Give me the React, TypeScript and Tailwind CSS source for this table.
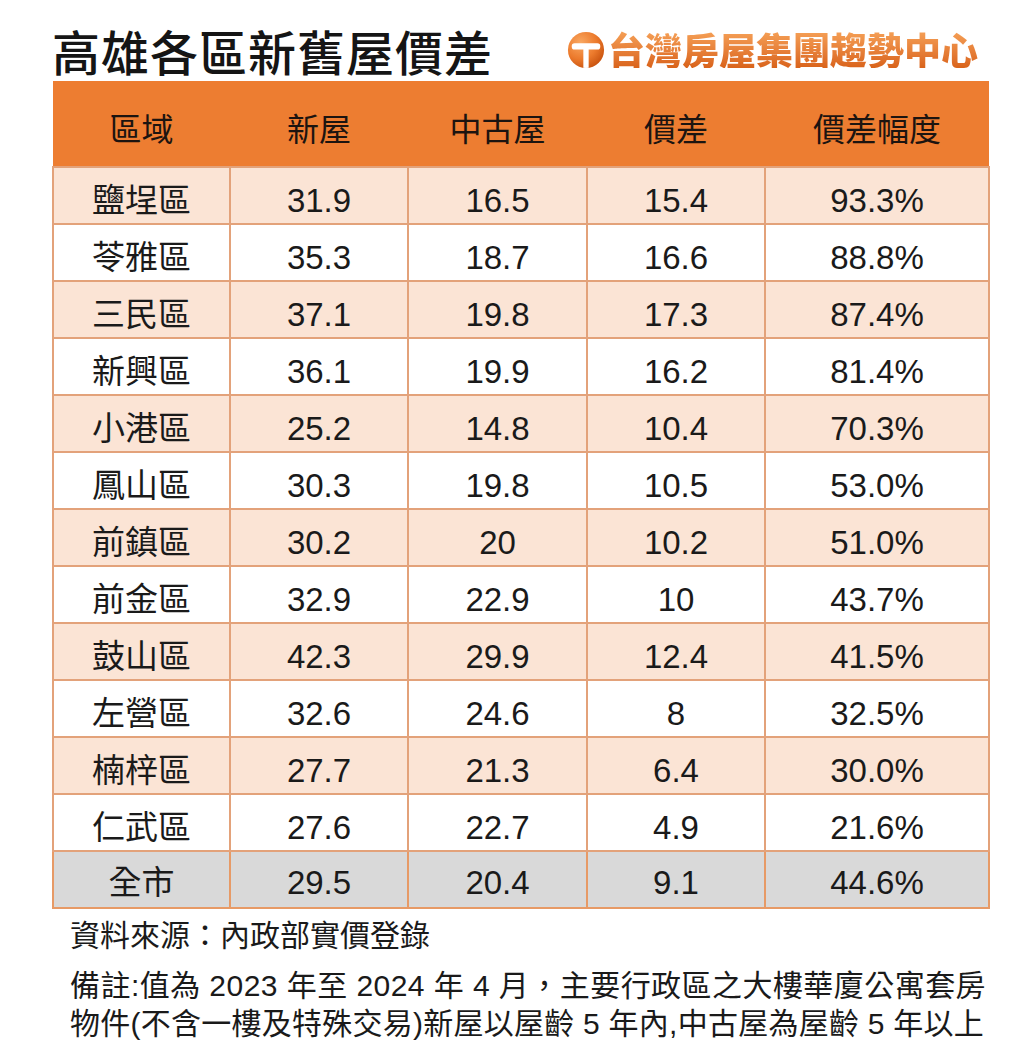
import React from "react";

const rows: [string, string, string, string, string][] = [
  ["鹽埕區", "31.9", "16.5", "15.4", "93.3%"],
  ["苓雅區", "35.3", "18.7", "16.6", "88.8%"],
  ["三民區", "37.1", "19.8", "17.3", "87.4%"],
  ["新興區", "36.1", "19.9", "16.2", "81.4%"],
  ["小港區", "25.2", "14.8", "10.4", "70.3%"],
  ["鳳山區", "30.3", "19.8", "10.5", "53.0%"],
  ["前鎮區", "30.2", "20", "10.2", "51.0%"],
  ["前金區", "32.9", "22.9", "10", "43.7%"],
  ["鼓山區", "42.3", "29.9", "12.4", "41.5%"],
  ["左營區", "32.6", "24.6", "8", "32.5%"],
  ["楠梓區", "27.7", "21.3", "6.4", "30.0%"],
  ["仁武區", "27.6", "22.7", "4.9", "21.6%"],
];

const headers = ["區域", "新屋", "中古屋", "價差", "價差幅度"];

function Logo() {
  return (
    <svg width="38" height="38" viewBox="0 0 40 40" className="shrink-0">
      <defs>
        <radialGradient id="lg" cx="35%" cy="30%" r="75%">
          <stop offset="0%" stopColor="#f9a862" />
          <stop offset="60%" stopColor="#ec7a2c" />
          <stop offset="100%" stopColor="#c9530f" />
        </radialGradient>
        <clipPath id="cc">
          <circle cx="20" cy="20" r="19" />
        </clipPath>
      </defs>
      <circle cx="20" cy="20" r="19" fill="url(#lg)" />
      <g clipPath="url(#cc)" fill="#ffffff">
        <rect x="5" y="13" width="30" height="6.5" rx="3" />
        <rect x="17.2" y="17" width="5.6" height="22" />
      </g>
    </svg>
  );
}

export default function App() {
  const font = { fontFamily: '"Liberation Sans", "Noto Sans CJK TC", sans-serif' };
  return (
    <div className="w-[1024px] h-[1053px] bg-white text-[#1a1a1a] overflow-hidden" style={font}>
      <div className="h-[81px] flex items-center justify-between pl-[52px] pr-[46px] pt-[18px]">
        <div className="text-[48px] leading-none font-medium text-[#151515] tracking-[1px]" style={{ fontFamily: '"Noto Sans CJK TC", sans-serif' }}>
          高雄各區新舊屋價差
        </div>
        <div className="flex items-center gap-[3px]">
          <Logo />
          <span
            className="text-[37px] leading-none font-black bg-linear-to-b from-[#f5a056] to-[#d9631a] bg-clip-text text-transparent"
            style={{ fontFamily: '"Noto Sans CJK TC", sans-serif' }}
          >
            台灣房屋集團趨勢中心
          </span>
        </div>
      </div>

      <table className="ml-[52px] w-[936px] table-fixed border-collapse">
        <colgroup>
          <col className="w-[177px]" />
          <col className="w-[178px]" />
          <col className="w-[179px]" />
          <col className="w-[178px]" />
          <col className="w-[224px]" />
        </colgroup>
        <thead>
          <tr className="h-[86px] bg-[#ed7d31]">
            {headers.map((h) => (
              <th key={h} className="text-[32px] font-normal text-[#1c1410] text-center align-middle pt-[12px] border-b-2 border-[#e3a27a]">
                {h}
              </th>
            ))}
          </tr>
        </thead>
        <tbody>
          {rows.map((r, i) => (
            <tr key={r[0]} className={i % 2 === 0 ? "h-[57px] bg-[#fbe4d5]" : "h-[57px] bg-white"}>
              {r.map((c, j) => (
                <td key={j} className="border-2 border-[#e3a27a] text-center align-middle text-[33px] leading-none pt-[9px]">
                  {c}
                </td>
              ))}
            </tr>
          ))}
          <tr className="h-[57px] bg-[#d9d9d9]">
            {["全市", "29.5", "20.4", "9.1", "44.6%"].map((c, j) => (
              <td key={j} className="border-2 border-[#e79a66] text-center align-middle text-[33px] leading-none pt-[6px]">
                {c}
              </td>
            ))}
          </tr>
        </tbody>
      </table>

      <div className="pl-[70px] text-[30px] text-[#1a1a1a] whitespace-nowrap">
        <div className="h-[54px] leading-[54px]">資料來源：內政部實價登錄</div>
        <div className="h-[46px] leading-[46px] tracking-[0.45px]">備註:值為 2023 年至 2024 年 4 月，主要行政區之大樓華廈公寓套房</div>
        <div className="h-[30px] leading-[30px] tracking-[0.25px]">物件(不含一樓及特殊交易)新屋以屋齡 5 年內,中古屋為屋齡 5 年以上</div>
      </div>
    </div>
  );
}
